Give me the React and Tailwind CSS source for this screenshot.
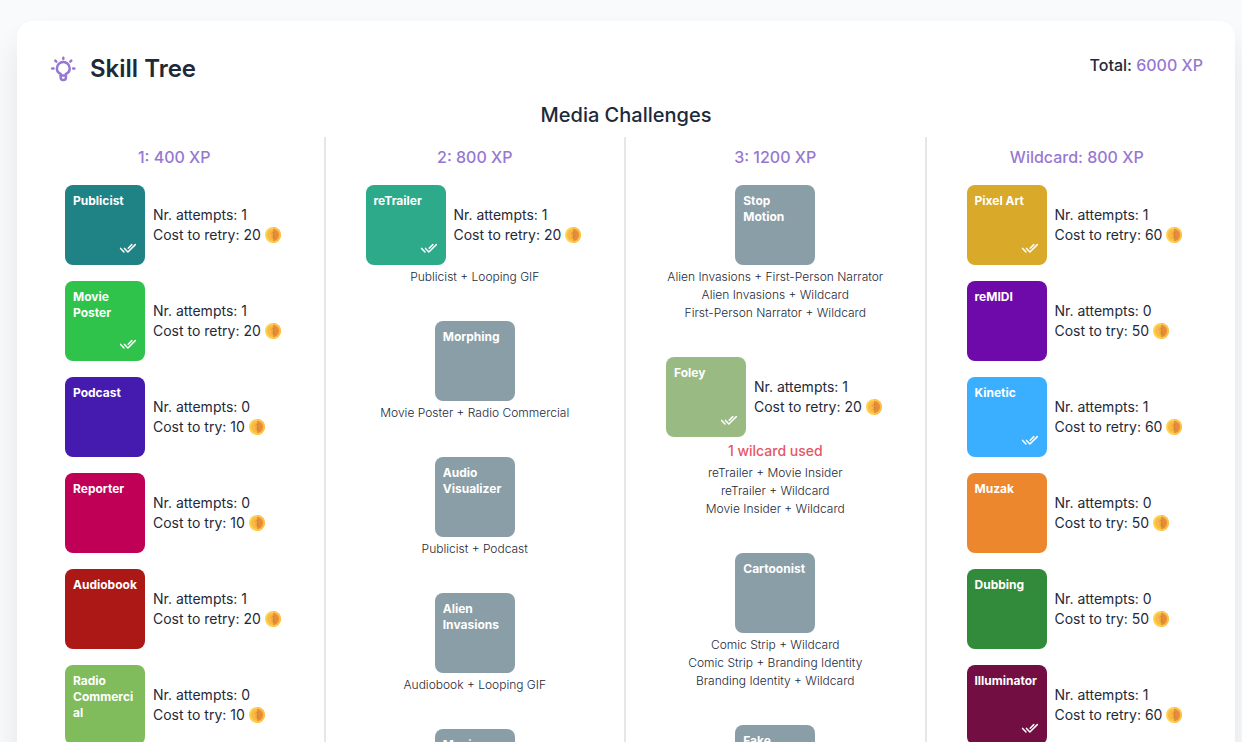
const columns = [
  {
    title: '1: 400 XP',
    skills: [
      { name: 'Publicist', color: 'bg-[#1f8284]', attempts: 1, cost: 20, done: true },
      { name: 'Movie Poster', color: 'bg-[#30c34b]', attempts: 1, cost: 20, done: true },
      { name: 'Podcast', color: 'bg-[#451aaf]', attempts: 0, cost: 10 },
      { name: 'Reporter', color: 'bg-[#bf0056]', attempts: 0, cost: 10 },
      { name: 'Audiobook', color: 'bg-[#ab1815]', attempts: 1, cost: 20 },
      { name: 'Radio Commercial', color: 'bg-[#80bc5b]', attempts: 0, cost: 10 },
    ],
  },
  {
    title: '2: 800 XP',
    tiered: true,
    skills: [
      { name: 'reTrailer', color: 'bg-[#2caa8a]', attempts: 1, cost: 20, done: true, combos: ['Publicist + Looping GIF'] },
      { name: 'Morphing', combos: ['Movie Poster + Radio Commercial'] },
      { name: 'Audio Visualizer', combos: ['Publicist + Podcast'] },
      { name: 'Alien Invasions', combos: ['Audiobook + Looping GIF'] },
      { name: 'Movie Insider', combos: [] },
    ],
  },
  {
    title: '3: 1200 XP',
    tiered: true,
    skills: [
      {
        name: 'Stop Motion',
        combos: ['Alien Invasions + First-Person Narrator', 'Alien Invasions + Wildcard', 'First-Person Narrator + Wildcard'],
      },
      {
        name: 'Foley',
        color: 'bg-[#9aba83]',
        attempts: 1,
        cost: 20,
        done: true,
        note: '1 wilcard used',
        combos: ['reTrailer + Movie Insider', 'reTrailer + Wildcard', 'Movie Insider + Wildcard'],
      },
      {
        name: 'Cartoonist',
        combos: ['Comic Strip + Wildcard', 'Comic Strip + Branding Identity', 'Branding Identity + Wildcard'],
      },
      { name: 'Fake', combos: [] },
    ],
  },
  {
    title: 'Wildcard: 800 XP',
    skills: [
      { name: 'Pixel Art', color: 'bg-[#d9a92a]', attempts: 1, cost: 60, done: true },
      { name: 'reMIDI', color: 'bg-[#6f0aaa]', attempts: 0, cost: 50 },
      { name: 'Kinetic', color: 'bg-[#3bafff]', attempts: 1, cost: 60, done: true },
      { name: 'Muzak', color: 'bg-[#ed872d]', attempts: 0, cost: 50 },
      { name: 'Dubbing', color: 'bg-[#318b3a]', attempts: 0, cost: 50 },
      { name: 'Illuminator', color: 'bg-[#730e43]', attempts: 1, cost: 60, done: true },
    ],
  },
];

function BulbIcon() {
  return (
    <svg className="size-7 text-[#9678d3]" viewBox="0 0 28 28" fill="none" stroke="currentColor" strokeWidth="2.5" strokeLinecap="round" strokeLinejoin="round" aria-hidden="true">
      <path d="M11.700 20.200v-1.400C9.300 17.800 7.900 15.700 7.900 13.400a6.400 6.400 0 0 1 12.800 0c0 2.300-1.400 4.400-3.800 5.400v3.900a2.200 2.200 0 0 1-2.200 2.200h-.8a2.200 2.200 0 0 1-2.200-2.200z" />
      <path d="M11.700 20.600h5.200M14.300 2.800v1.200M6.300 5.600l1 1M22.300 5.600l-1 1M3.200 13.400h1.300M24.100 13.400h1.300" />
    </svg>
  );
}

function DoubleCheckIcon() {
  return (
    <svg className="size-[18px] text-white" viewBox="0 0 18 18" fill="none" stroke="currentColor" strokeWidth="1.5" strokeLinecap="round" strokeLinejoin="round" aria-hidden="true">
      <path d="M1.600 9.400l3.400 3.600M5.500 9.400l3.400 3.600 7.400-7.400M9.200 9.200l3.600-3.600" />
    </svg>
  );
}

function CoinIcon() {
  return (
    <svg className="size-4" viewBox="0 0 16 16" aria-hidden="true">
      <circle cx="8" cy="8" r="8" fill="#fed154" />
      <path d="M8 0a8 8 0 0 1 0 16z" fill="#fdbf48" />
      <circle cx="8" cy="8" r="6" fill="#fbb942" />
      <path d="M8 2a6 6 0 0 1 0 12z" fill="#e58d38" />
      <path d="M8 5.400c-1 0-1.700.5-1.700 1.300C6.300 7.500 7.200 7.800 8 8M8 10.700c-.9 0-1.500-.3-1.900-.9M8 4.400v7.200" fill="none" stroke="#e0963a" strokeWidth=".9" />
      <path d="M9.600 6.200C9.200 5.600 8.700 5.400 8 5.400M8 8c.8.200 1.600.6 1.600 1.400 0 .8-.7 1.300-1.600 1.300" fill="none" stroke="#d27b30" strokeWidth=".9" />
    </svg>
  );
}

function Tile({ skill }) {
  return (
    <div className={`flex size-20 shrink-0 flex-col justify-between rounded-lg p-2 ${skill.color ?? 'bg-[#8a9ea7]'}`}>
      <h4 className="text-xs font-bold text-white wrap-break-word">{skill.name}</h4>
      {skill.done && (
        <div className="flex justify-end">
          <DoubleCheckIcon />
        </div>
      )}
    </div>
  );
}

function Skill({ skill, tiered }) {
  const open = skill.attempts !== undefined;
  return (
    <li className={tiered ? 'mb-[35px]' : 'mb-4'}>
      <div className={open ? 'flex items-center gap-2' : 'flex justify-center'}>
        <Tile skill={skill} />
        {open && (
          <div className="text-sm leading-5 whitespace-nowrap">
            <p>Nr. attempts: {skill.attempts}</p>
            <p className="flex items-center gap-1">
              Cost to {skill.attempts > 0 ? 'retry' : 'try'}: {skill.cost}
              <CoinIcon />
            </p>
          </div>
        )}
      </div>
      {skill.note && <p className="mt-1 text-center text-sm leading-5 font-medium text-[#e45865]">{skill.note}</p>}
      {skill.combos && (
        <div className="pt-[3px] text-center text-xs leading-[18px] font-light whitespace-nowrap text-gray-800">
          {skill.combos.map((combo) => (
            <p key={combo}>{combo}</p>
          ))}
        </div>
      )}
    </li>
  );
}

export default function App() {
  return (
    <div className="min-h-screen bg-[#f9fafc] pt-[21px] pr-[7px] pl-[17px] font-[Inter,sans-serif] text-gray-800">
      <main className="rounded-2xl bg-white px-2 pt-8 shadow-[0_20px_30px_rgba(0,0,0,0.09)]">
        <header className="flex items-start justify-between px-6">
          <div className="flex items-center gap-[13px]">
            <BulbIcon />
            <h1 className="text-2xl font-semibold">Skill Tree</h1>
          </div>
          <p className="font-medium">
            Total: <span className="text-[#9678d3]">6000 XP</span>
          </p>
        </header>
        <h2 className="mt-4 mb-2 text-center text-xl font-medium">Media Challenges</h2>
        <div className="grid grid-cols-4 divide-x-2 divide-[#e7e7e7]">
          {columns.map((column) => (
            <section key={column.title} className="pt-2">
              <h3 className="mb-4 text-center font-medium text-[#9678d3]">{column.title}</h3>
              <ul className="px-10">
                {column.skills.map((skill) => (
                  <Skill key={skill.name} skill={skill} tiered={column.tiered} />
                ))}
              </ul>
            </section>
          ))}
        </div>
      </main>
    </div>
  );
}
